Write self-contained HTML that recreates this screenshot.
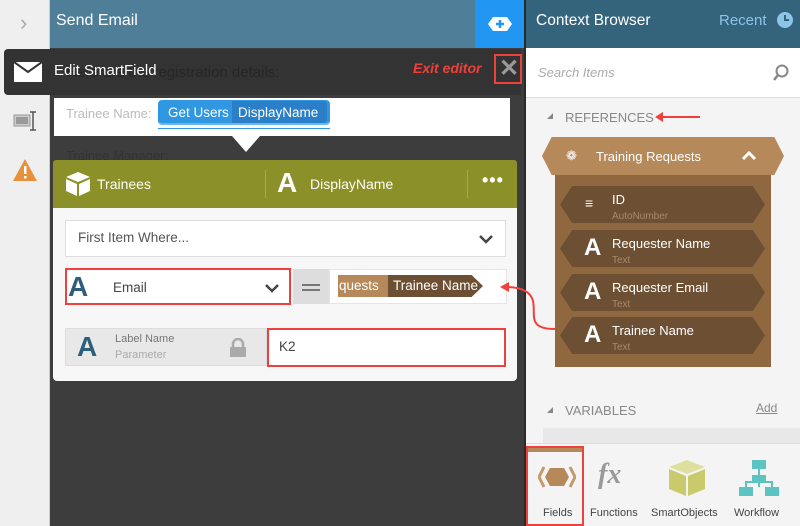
<!DOCTYPE html>
<html><head><meta charset="utf-8"><style>
*{box-sizing:border-box;margin:0;padding:0}
body{width:800px;height:526px;overflow:hidden;position:relative;font-family:"Liberation Sans",sans-serif;background:#3d3d3d}
.a{position:absolute}
</style></head><body>
<div class="a" style="left:0;top:0;width:50px;height:526px;background:#efefef;border-right:1px solid #ccc"></div>
<div class="a" style="left:20px;top:10px;color:#aaa;font-size:22px">&#x203A;</div>
<svg class="a" style="left:13px;top:110px" width="26" height="22"><rect x="1" y="5" width="16" height="11" fill="#ccc" stroke="#999"/><rect x="3" y="7" width="12" height="7" fill="#999"/><path d="M20 2v18M17 2h6M17 20h6" stroke="#555" stroke-width="1.5"/></svg>
<svg class="a" style="left:12px;top:158px" width="26" height="24"><path d="M13 1L25 23H1Z" fill="#e8913a"/><rect x="12" y="8" width="2.5" height="8" fill="#fff"/><rect x="12" y="18" width="2.5" height="2.5" fill="#fff"/></svg>
<div class="a" style="left:50px;top:0;width:425px;height:48px;background:#4f7f98"></div>
<div class="a" style="left:56px;top:12px;color:#fff;font-size:16px">Send Email</div>
<div class="a" style="left:475px;top:0;width:49px;height:48px;background:#2196f3"></div>
<svg class="a" style="left:487px;top:14px" width="26" height="20"><path d="M6 3h14l5 7-5 7H6l-5-7z" fill="#fff"/><path d="M13 6v8M9 10h8" stroke="#2196f3" stroke-width="2.5"/></svg>
<div class="a" style="left:4px;top:49px;width:517px;height:46px;background:#333;border-radius:4px 0 0 4px"></div>
<div class="a" style="left:66px;top:64px;color:#262626;font-size:15px">Here are the registration details:</div>
<svg class="a" style="left:14px;top:62px" width="28" height="20"><rect width="28" height="20" fill="#fff"/><path d="M0 0l14 10 14-10" stroke="#333" stroke-width="2" fill="none"/></svg>
<div class="a" style="left:54px;top:62px;color:#fff;font-size:15px">Edit SmartField</div>
<div class="a" style="left:413px;top:60px;color:#f0403c;font-size:14px;font-style:italic;font-weight:bold">Exit editor</div>
<div class="a" style="left:494px;top:54px;width:28px;height:30px;border:2px solid #f0403c"></div>
<div class="a" style="left:499px;top:54px;color:#999;font-size:24px;font-weight:bold">&#x2715;</div>
<div class="a" style="left:54px;top:98px;width:456px;height:38px;background:#fff"></div>
<div class="a" style="left:66px;top:106px;color:#bbb;font-size:13px">Trainee Name:</div>
<div class="a" style="left:158px;top:100px;width:172px;height:25px;background:#3097e3;border-radius:4px;border-bottom:2px solid #6ab7f0"></div>
<div class="a" style="left:232px;top:101px;width:95px;height:22px;background:#2a7fc8;border-radius:0 4px 4px 0"></div>
<div class="a" style="left:168px;top:105px;color:#fff;font-size:13.5px">Get Users</div>
<div class="a" style="left:238px;top:105px;color:#fff;font-size:13.5px">DisplayName</div>
<div class="a" style="left:158px;top:128px;width:172px;height:1px;background:#3097e3"></div>
<div class="a" style="left:232px;top:136px;width:0;height:0;border-left:14px solid transparent;border-right:14px solid transparent;border-top:16px solid #fff"></div>
<div class="a" style="left:66px;top:148px;color:#333;font-size:13px">Trainee Manager:</div>
<div class="a" style="left:53px;top:160px;width:464px;height:48px;background:#8c9029;border-radius:3px 3px 0 0"></div>
<svg class="a" style="left:65px;top:171px" width="26" height="26"><path d="M13 1L25 6 13 11 1 6z" fill="#fff"/><path d="M1 8l11 5v12L1 20z M25 8l-11 5v12l11-5z" fill="#fff"/></svg>
<div class="a" style="left:97px;top:176px;color:#fff;font-size:14px">Trainees</div>
<div class="a" style="left:265px;top:170px;width:1px;height:28px;background:#a6aa48"></div>
<div class="a" style="left:277px;top:167px;color:#fff;font-size:28px;font-weight:bold">A</div>
<div class="a" style="left:310px;top:176px;color:#fff;font-size:14px">DisplayName</div>
<div class="a" style="left:467px;top:170px;width:1px;height:28px;background:#a6aa48"></div>
<div class="a" style="left:482px;top:170px;color:#fff;font-size:18px;font-weight:bold;letter-spacing:1px">•••</div>
<div class="a" style="left:53px;top:208px;width:464px;height:173px;background:#f7f7f7;border-radius:0 0 4px 4px"></div>
<div class="a" style="left:65px;top:220px;width:441px;height:37px;background:#fff;border:1px solid #ddd"></div>
<div class="a" style="left:78px;top:230px;color:#555;font-size:13.5px">First Item Where...</div>
<svg class="a" style="left:478px;top:233px" width="16" height="12"><path d="M2 3l6 6 6-6" stroke="#444" stroke-width="2.5" fill="none"/></svg>
<div class="a" style="left:65px;top:268px;width:226px;height:37px;background:#fff;border:2px solid #f0403c"></div>
<div class="a" style="left:68px;top:271px;color:#2d5e7c;font-size:28px;font-weight:bold">A</div>
<div class="a" style="left:113px;top:280px;color:#444;font-size:13.5px">Email</div>
<svg class="a" style="left:264px;top:282px" width="16" height="12"><path d="M2 3l6 6 6-6" stroke="#444" stroke-width="2.5" fill="none"/></svg>
<div class="a" style="left:293px;top:269px;width:36px;height:35px;background:#ddd"></div>
<div class="a" style="left:302px;top:284px;width:18px;height:2px;background:#777;box-shadow:0 5px 0 #777"></div>
<div class="a" style="left:329px;top:269px;width:178px;height:35px;background:#fff;border:1px solid #e5e5e5"></div>
<div class="a" style="left:338px;top:275px;width:50px;height:22px;background:#b6895a"></div>
<div class="a" style="left:388px;top:275px;width:95px;height:22px;background:#6d4f33;clip-path:polygon(0 0,88% 0,100% 50%,88% 100%,0 100%)"></div>
<div class="a" style="left:339px;top:278px;color:#fff;font-size:13.5px">quests</div>
<div class="a" style="left:393px;top:278px;color:#fff;font-size:13.5px">Trainee Name</div>
<div class="a" style="left:65px;top:328px;width:202px;height:38px;background:#e8e8e8;border:1px solid #ddd"></div>
<div class="a" style="left:77px;top:331px;color:#2d5e7c;font-size:28px;font-weight:bold">A</div>
<div class="a" style="left:115px;top:333px;color:#777;font-size:11px">Label Name</div>
<div class="a" style="left:115px;top:349px;color:#aaa;font-size:11px">Parameter</div>
<svg class="a" style="left:229px;top:338px" width="18" height="20"><path d="M4 9V6a5 5 0 0 1 10 0v3" stroke="#aaa" stroke-width="2.5" fill="none"/><rect x="1" y="9" width="16" height="10" fill="#aaa"/></svg>
<div class="a" style="left:267px;top:328px;width:239px;height:39px;background:#fff;border:2px solid #f0403c"></div>
<div class="a" style="left:279px;top:339px;color:#444;font-size:13.5px">K2</div>
<div class="a" style="left:524px;top:0;width:2px;height:526px;background:#2a2a2a"></div>
<div class="a" style="left:526px;top:0;width:274px;height:526px;background:#f4f4f4"></div>
<div class="a" style="left:526px;top:0;width:274px;height:48px;background:#34637c"></div>
<div class="a" style="left:536px;top:12px;color:#fff;font-size:15.5px">Context Browser</div>
<div class="a" style="left:719px;top:12px;color:#8cc4ea;font-size:15px">Recent</div>
<svg class="a" style="left:776px;top:11px" width="18" height="18"><circle cx="9" cy="9" r="8" fill="#8cc4ea"/><path d="M9 4v5h4" stroke="#34637c" stroke-width="2" fill="none"/></svg>
<div class="a" style="left:526px;top:48px;width:274px;height:50px;background:#fff;border-bottom:1px solid #ddd"></div>
<div class="a" style="left:538px;top:65px;color:#aaa;font-size:13px;font-style:italic">Search Items</div>
<svg class="a" style="left:772px;top:64px" width="18" height="18"><circle cx="10" cy="7" r="5.5" stroke="#888" stroke-width="2" fill="none"/><path d="M6 11l-4 5" stroke="#888" stroke-width="2.5"/></svg>
<div class="a" style="left:547px;top:113px;width:0;height:0;border-left:6px solid transparent;border-bottom:6px solid #888"></div>
<div class="a" style="left:565px;top:110px;color:#888;font-size:13px">REFERENCES</div>
<div class="a" style="left:660px;top:116px;width:40px;height:2px;background:#f0403c"></div>
<div class="a" style="left:655px;top:112px;width:0;height:0;border-top:5px solid transparent;border-bottom:5px solid transparent;border-right:8px solid #f0403c"></div>
<div class="a" style="left:555px;top:175px;width:216px;height:192px;background:#8f6840"></div>
<div class="a" style="left:542px;top:137px;width:242px;height:38px;background:#b6895a;clip-path:polygon(4% 0,96% 0,100% 50%,96% 100%,4% 100%,0 50%)"></div>
<div class="a" style="left:566px;top:148px;color:#fff;font-size:13px">&#x2741;</div>
<div class="a" style="left:596px;top:149px;color:#fff;font-size:13px">Training Requests</div>
<svg class="a" style="left:741px;top:150px" width="16" height="12"><path d="M2 9l6-6 6 6" stroke="#fff" stroke-width="3" fill="none"/></svg>
<div class="a" style="left:560px;top:186px;width:205px;height:37px;background:#6d4f33;clip-path:polygon(6% 0,94% 0,100% 50%,94% 100%,6% 100%,0 50%)"></div>
<div class="a" style="left:560px;top:230px;width:205px;height:37px;background:#6d4f33;clip-path:polygon(6% 0,94% 0,100% 50%,94% 100%,6% 100%,0 50%)"></div>
<div class="a" style="left:560px;top:274px;width:205px;height:37px;background:#6d4f33;clip-path:polygon(6% 0,94% 0,100% 50%,94% 100%,6% 100%,0 50%)"></div>
<div class="a" style="left:560px;top:317px;width:205px;height:37px;background:#6d4f33;clip-path:polygon(6% 0,94% 0,100% 50%,94% 100%,6% 100%,0 50%)"></div>
<div class="a" style="left:585px;top:195px;color:#fff;font-size:14px;font-weight:bold">&#x2261;</div>
<div class="a" style="left:584px;top:234px;color:#fff;font-size:24px;font-weight:bold">A</div>
<div class="a" style="left:584px;top:278px;color:#fff;font-size:24px;font-weight:bold">A</div>
<div class="a" style="left:584px;top:321px;color:#fff;font-size:24px;font-weight:bold">A</div>
<div class="a" style="left:612px;top:192px;color:#fff;font-size:13px">ID</div>
<div class="a" style="left:612px;top:211px;color:#a88a6a;font-size:10px">AutoNumber</div>
<div class="a" style="left:612px;top:236px;color:#fff;font-size:13px;width:100px;overflow:hidden;white-space:nowrap">Requester Name</div>
<div class="a" style="left:612px;top:255px;color:#a88a6a;font-size:10px">Text</div>
<div class="a" style="left:612px;top:280px;color:#fff;font-size:13px;width:102px;overflow:hidden;white-space:nowrap">Requester Email</div>
<div class="a" style="left:612px;top:299px;color:#a88a6a;font-size:10px">Text</div>
<div class="a" style="left:612px;top:323px;color:#fff;font-size:13px">Trainee Name</div>
<div class="a" style="left:612px;top:342px;color:#a88a6a;font-size:10px">Text</div>
<svg class="a" style="left:495px;top:278px" width="70" height="60"><path d="M10 9c18 0 26 6 28 14 3 14-6 28 22 28" stroke="#f0403c" stroke-width="2" fill="none"/><path d="M5 9l9-5v10z" fill="#f0403c"/></svg>
<div class="a" style="left:547px;top:407px;width:0;height:0;border-left:6px solid transparent;border-bottom:6px solid #888"></div>
<div class="a" style="left:565px;top:403px;color:#888;font-size:13px">VARIABLES</div>
<div class="a" style="left:756px;top:401px;color:#888;font-size:12px;text-decoration:underline">Add</div>
<div class="a" style="left:543px;top:428px;width:257px;height:18px;background:#e8e8e8"></div>
<div class="a" style="left:526px;top:443px;width:274px;height:83px;background:#f4f4f4;border-top:1px solid #ddd"></div>
<div class="a" style="left:526px;top:446px;width:58px;height:80px;border:2px solid #f0403c"></div>
<div class="a" style="left:528px;top:448px;width:54px;height:4px;background:#b6895a"></div>
<svg class="a" style="left:538px;top:465px" width="38" height="24"><path d="M6 2L1 12l5 10" stroke="#c49a6a" stroke-width="3" fill="none"/><path d="M32 2l5 10-5 10" stroke="#c49a6a" stroke-width="3" fill="none"/><path d="M12 3h14l5 9-5 9H12l-5-9z" fill="#b6895a"/></svg>
<div class="a" style="left:543px;top:507px;color:#444;font-size:11px">Fields</div>
<div class="a" style="left:598px;top:459px;color:#999;font-size:28px;font-style:italic;font-family:'Liberation Serif',serif;font-weight:bold">fx</div>
<div class="a" style="left:590px;top:507px;color:#444;font-size:11px">Functions</div>
<svg class="a" style="left:668px;top:459px" width="38" height="38"><path d="M19 1L37 8 19 15 1 8z" fill="#dfe0a0"/><path d="M1 10l17 7v20L1 30zM37 10l-17 7v20l17-7z" fill="#c8ca6c"/></svg>
<div class="a" style="left:651px;top:507px;color:#444;font-size:11px">SmartObjects</div>
<svg class="a" style="left:738px;top:459px" width="42" height="38"><rect x="14" y="1" width="14" height="9" fill="#5bc4c0"/><rect x="1" y="28" width="14" height="9" fill="#5bc4c0"/><rect x="27" y="28" width="14" height="9" fill="#5bc4c0"/><rect x="14" y="16" width="14" height="7" fill="#5bc4c0"/><path d="M21 10v18M8 28v-5h26v5" stroke="#5bc4c0" stroke-width="2" fill="none"/></svg>
<div class="a" style="left:734px;top:507px;color:#444;font-size:11px">Workflow</div>
</body></html>
